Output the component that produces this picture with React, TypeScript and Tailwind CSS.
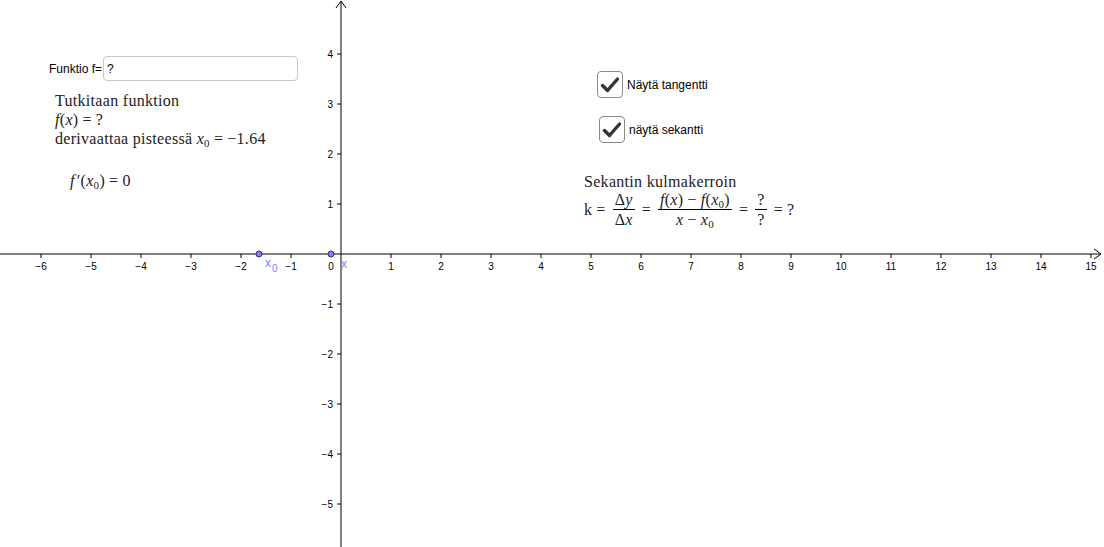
import React from 'react';

const OX = 341;
const OY = 254;
const U = 50;

const xs = Array.from({ length: 22 }, (_, i) => i - 6).filter((n) => n !== 0);
const ys = [-5, -4, -3, -2, -1, 1, 2, 3, 4];

function fmt(n: number) {
  return n < 0 ? `\u2212${-n}` : `${n}`;
}

function Axes() {
  return (
    <svg className="absolute inset-0" width={1104} height={547}>
      {/* x axis */}
      <line x1={0} y1={OY} x2={1101} y2={OY} stroke="#000" strokeWidth={1} />
      <path d={`M1094 ${OY - 5} L1101 ${OY} L1094 ${OY + 5}`} fill="none" stroke="#000" strokeWidth={1} />
      {/* y axis */}
      <line x1={OX} y1={1} x2={OX} y2={547} stroke="#000" strokeWidth={1} />
      <path d={`M${OX - 5} 8 L${OX} 1 L${OX + 5} 8`} fill="none" stroke="#000" strokeWidth={1} />
      {xs.map((n) => (
        <g key={n}>
          <line x1={OX + n * U} y1={OY} x2={OX + n * U} y2={OY + 4} stroke="#000" />
          <text
            x={OX + n * U}
            y={OY + 16}
            textAnchor="middle"
            fontSize={10}
            fontFamily="Liberation Sans, sans-serif"
            fill="#000"
          >
            {fmt(n)}
          </text>
        </g>
      ))}
      <text x={331} y={OY + 16} textAnchor="middle" fontSize={10} fontFamily="Liberation Sans, sans-serif">
        0
      </text>
      {ys.map((n) => (
        <g key={n}>
          <line x1={OX - 4} y1={OY - n * U} x2={OX} y2={OY - n * U} stroke="#000" />
          <text
            x={333}
            y={OY - n * U + 3.5}
            textAnchor="end"
            fontSize={10}
            fontFamily="Liberation Sans, sans-serif"
          >
            {fmt(n)}
          </text>
        </g>
      ))}
      {/* points */}
      <circle cx={259} cy={OY} r={3} fill="#8080ff" stroke="#2e2e6b" strokeWidth={1} />
      <circle cx={331} cy={OY} r={3} fill="#8080ff" stroke="#2e2e6b" strokeWidth={1} />
      <text x={265} y={267} fontSize={12} fontFamily="Liberation Sans, sans-serif" fill="#8080ff">
        x
      </text>
      <text x={272} y={272} fontSize={10} fontFamily="Liberation Sans, sans-serif" fill="#8080ff">
        0
      </text>
      <text x={341} y={268} fontSize={12} fontFamily="Liberation Sans, sans-serif" fill="#8080ff">
        x
      </text>
    </svg>
  );
}

function Check() {
  return (
    <div className="w-[26px] h-[27px] rounded-[4px] border border-[#8a8a8a] bg-white flex items-center justify-center">
      <svg width={20} height={18} viewBox="0 0 20 18">
        <path d="M2.5 9.5 L7.5 14.5 L17.5 3" fill="none" stroke="#333" strokeWidth={3.4} strokeLinecap="round" strokeLinejoin="round" />
      </svg>
    </div>
  );
}

const serif = "font-['Liberation_Serif',serif] text-[16px] tracking-[0.3px] text-[#222]";

function Frac({ num, den }: { num: React.ReactNode; den: React.ReactNode }) {
  return (
    <span className="inline-flex flex-col items-center mx-[3px] leading-[17px]">
      <span className="px-[2px] pb-[1px]">{num}</span>
      <span className="self-stretch border-t border-black" />
      <span className="px-[2px] pt-[1px]">{den}</span>
    </span>
  );
}

function Eq() {
  return <span className="mx-[4px]">=</span>;
}

function Sub({ children }: { children: React.ReactNode }) {
  return <sub className="text-[11px]">{children}</sub>;
}

export default function App() {
  return (
    <div className="relative w-[1104px] h-[547px] bg-white overflow-hidden">
      <Axes />

      {/* input box */}
      <div className="absolute left-[49px] top-[56px] flex items-center gap-[1px] font-['Liberation_Sans',sans-serif] text-[12px] text-black">
        <span>Funktio f=</span>
        <div className="w-[195px] h-[25px] rounded-[4px] border border-[#c8c8c8] bg-white flex items-center px-[3px]">
          ?
        </div>
      </div>

      {/* left text */}
      <div className={`absolute left-[55px] top-[91px] ${serif} leading-[19px]`}>
        <div>Tutkitaan funktion</div>
        <div>
          <i>f</i>(<i>x</i>)<Eq />?
        </div>
        <div>
          derivaattaa pisteessä <i>x</i>
          <Sub>0</Sub>
          <Eq />−1.64
        </div>
      </div>
      <div className={`absolute left-[70px] top-[171px] ${serif} leading-[19px]`}>
        <i>f</i>
        <span className="ml-[2px]">′</span>(<i>x</i>
        <Sub>0</Sub>)<Eq />0
      </div>

      {/* checkboxes */}
      <div className="absolute left-[597px] top-[71px] flex items-center gap-[4px] font-['Liberation_Sans',sans-serif] text-[12px]">
        <Check />
        <span>Näytä tangentti</span>
      </div>
      <div className="absolute left-[599px] top-[116px] flex items-center gap-[4px] font-['Liberation_Sans',sans-serif] text-[12px]">
        <Check />
        <span>näytä sekantti</span>
      </div>

      {/* secant text */}
      <div className={`absolute left-[584px] top-[172px] ${serif} leading-[19px]`}>Sekantin kulmakerroin</div>
      <div className={`absolute left-[584px] top-[191px] flex items-center ${serif}`}>
        <span>k</span>
        <Eq />
        <Frac num={<>Δ<i>y</i></>} den={<>Δ<i>x</i></>} />
        <Eq />
        <Frac
          num={
            <>
              <i>f</i>(<i>x</i>)<span className="mx-[4px]">−</span>
              <i>f</i>(<i>x</i>
              <Sub>0</Sub>)
            </>
          }
          den={
            <>
              <i>x</i>
              <span className="mx-[4px]">−</span>
              <i>x</i>
              <Sub>0</Sub>
            </>
          }
        />
        <Eq />
        <Frac num="?" den="?" />
        <Eq />
        <span>?</span>
      </div>
    </div>
  );
}
